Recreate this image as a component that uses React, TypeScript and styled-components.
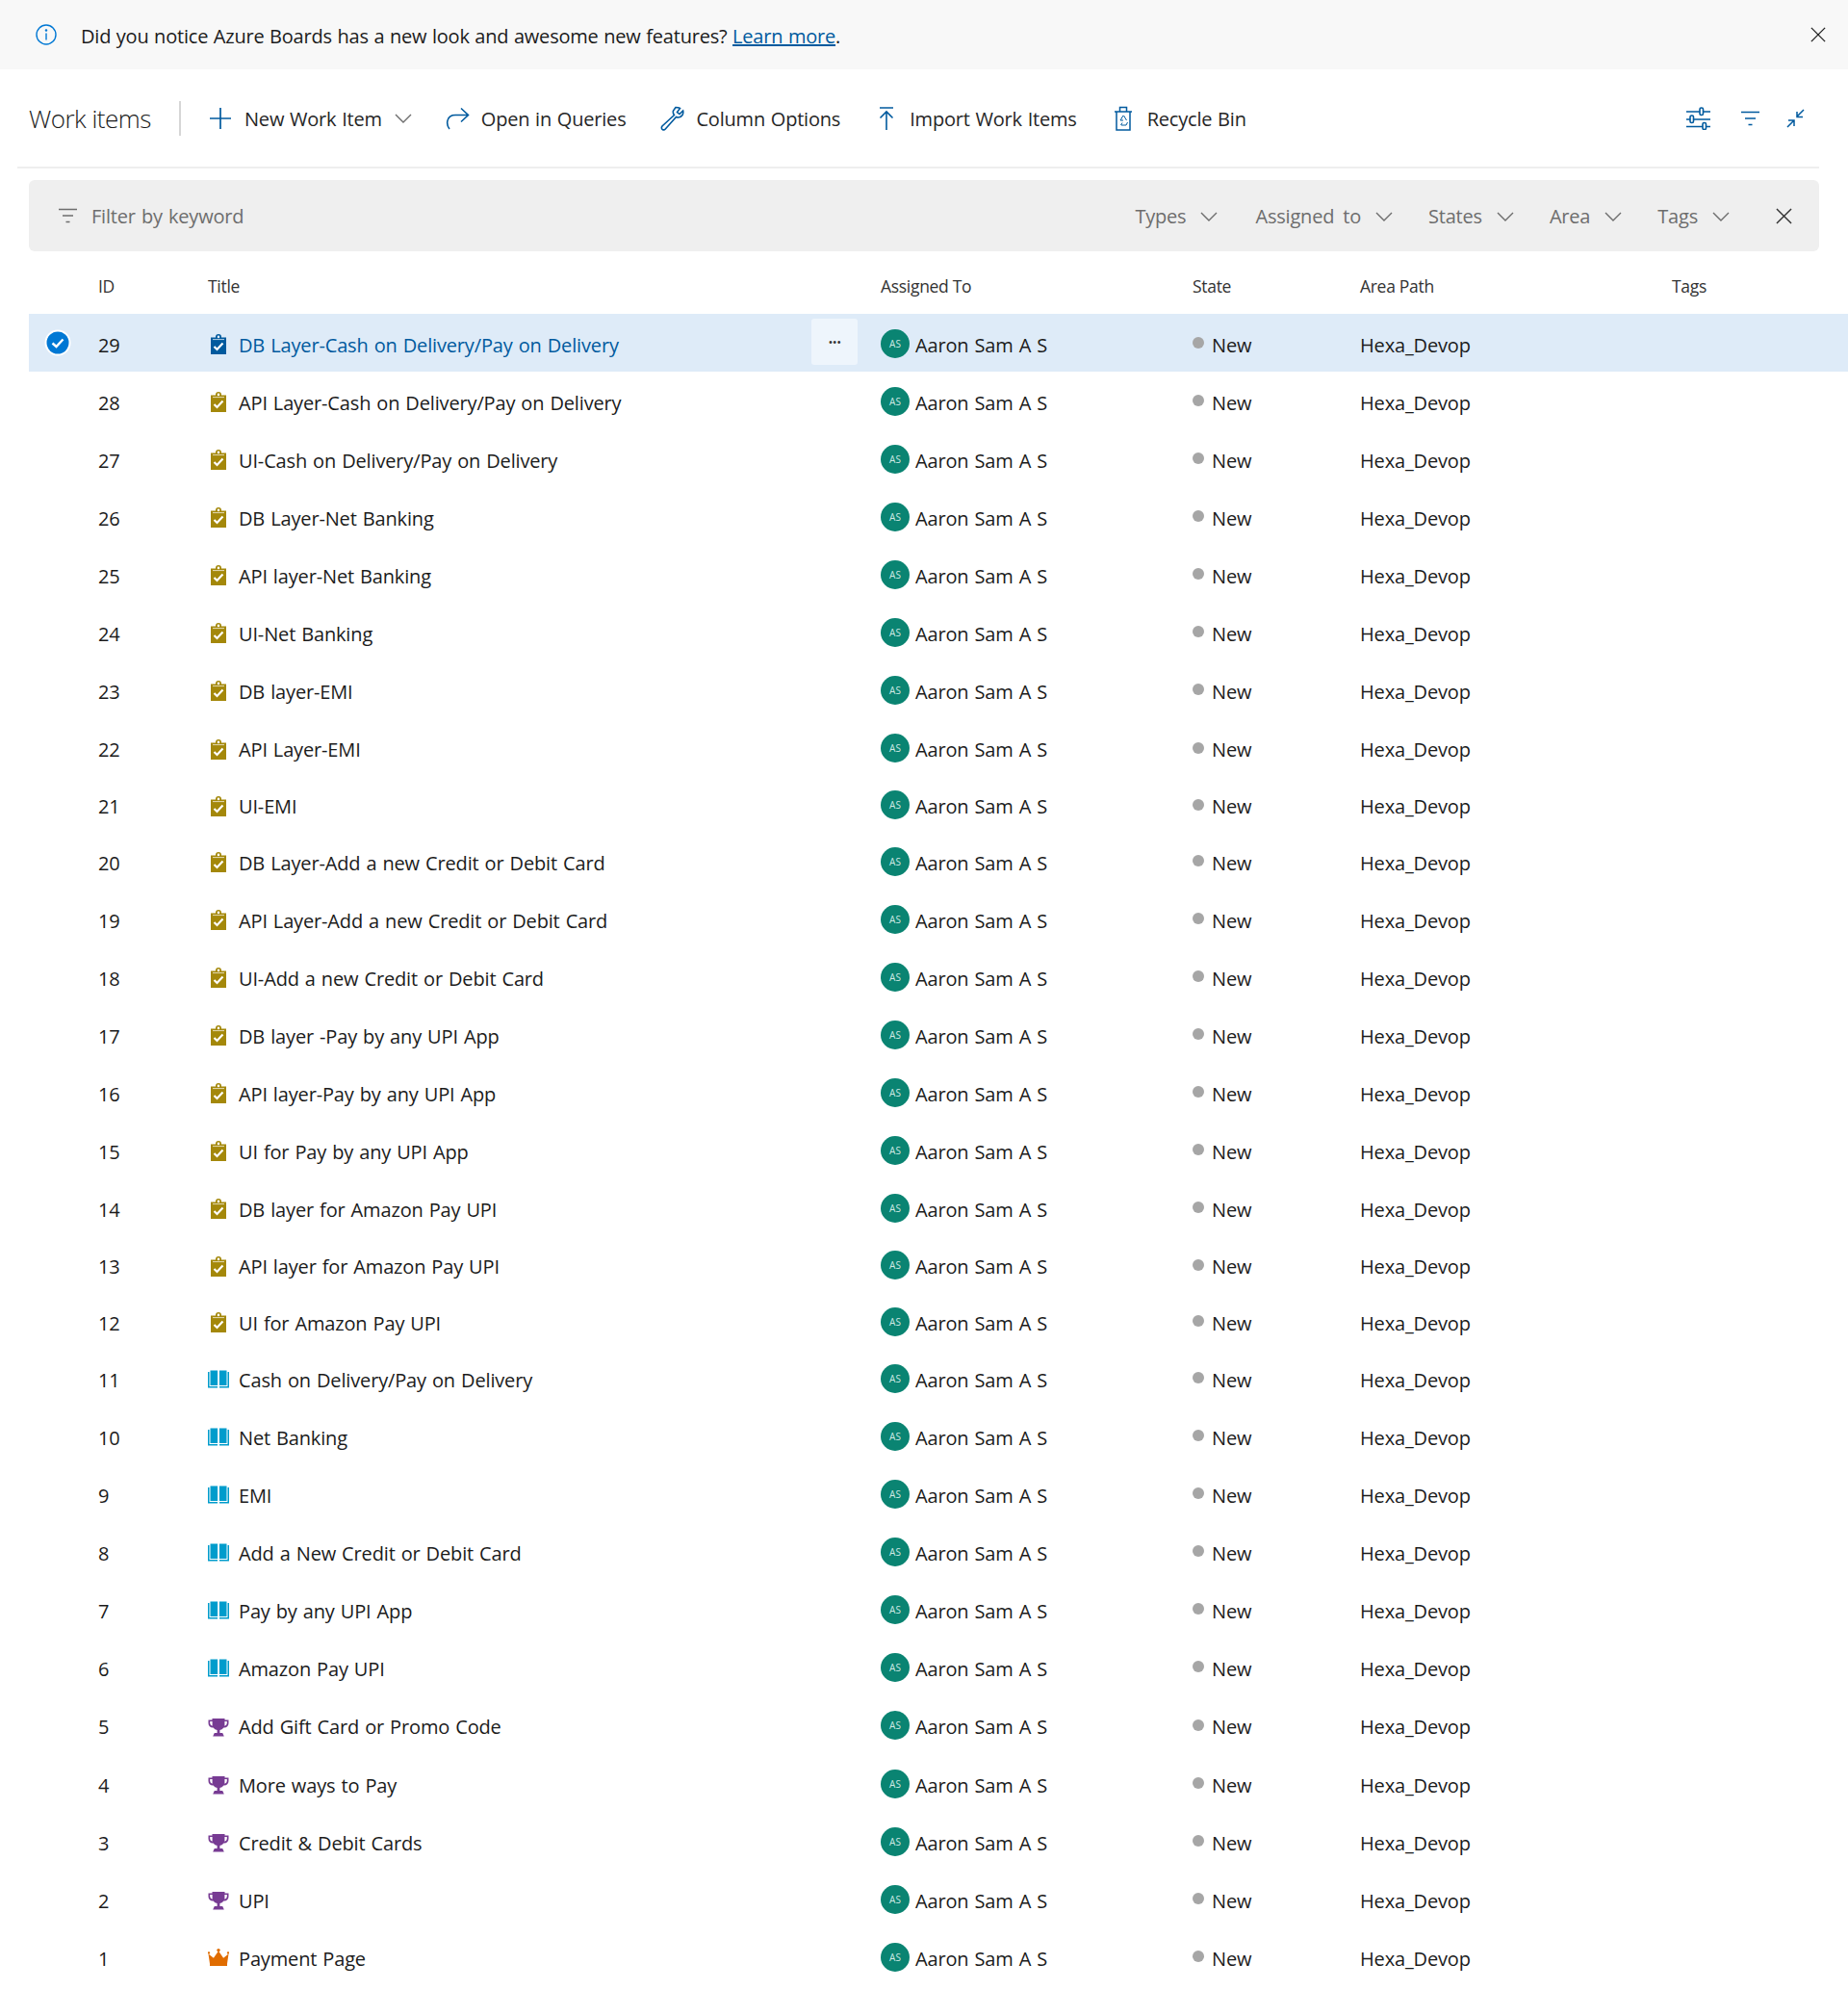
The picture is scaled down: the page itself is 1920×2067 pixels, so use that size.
import styled, { createGlobalStyle } from "styled-components"

const GlobalStyle = createGlobalStyle`
  html, body {
    margin: 0;
    padding: 0;
    background: #fff;
  }
  body {
    font-family: "Open Sans", "Noto Sans", "Liberation Sans", sans-serif;
    color: #1b1b1b;
  }
`

const Page = styled.div`
  width: 1920px;
  height: 2067px;
  overflow: hidden;
  background: #fff;
`

const Banner = styled.div`
  height: 72px;
  background: #f8f8f8;
  display: flex;
  align-items: center;
  padding: 0 23px 0 37px;
  font-size: 20px;
  letter-spacing: -0.2px;
  word-spacing: 0.6px;
`

const BannerText = styled.span`
  margin-left: 25px;
  padding-top: 2px;
  flex: 1;
`

const LearnMore = styled.a`
  color: #005a9e;
  text-decoration: underline;
`

const Toolbar = styled.div`
  height: 103px;
  margin: 0 30px 0 18px;
  padding: 0 0 0 12px;
  border-bottom: 2px solid #eeeeee;
  display: flex;
  align-items: center;
  box-sizing: border-box;
`

const PageTitle = styled.h1`
  margin: 0;
  width: 156px;
  height: 36px;
  line-height: 36px;
  font-size: 26px;
  font-weight: 300;
  letter-spacing: -0.5px;
  border-right: 2px solid #d6d6d6;
  box-sizing: content-box;
  flex: none;
`

const ToolButton = styled.div<{ $left: number; $gap: number }>`
  display: flex;
  align-items: center;
  gap: ${(p) => p.$gap}px;
  margin-left: ${(p) => p.$left}px;
  font-size: 20px;
  letter-spacing: -0.2px;
  word-spacing: 0.8px;
  color: #262626;
  white-space: nowrap;
  svg {
    flex: none;
  }
`

const ToolLabel = styled.span`
  padding-top: 2px;
`

const ToolIcons = styled.div`
  margin-left: auto;
  display: flex;
  align-items: center;
  gap: 28px;
  padding-right: 15px;
  svg:first-child {
    margin-right: 4px;
  }
`

const FilterBar = styled.div`
  height: 74px;
  margin: 12px 30px 0;
  padding: 0 28px 0 31px;
  background: #efefef;
  border-radius: 6px;
  display: flex;
  align-items: center;
  color: #6d6d6d;
  font-size: 20px;
  letter-spacing: -0.2px;
  word-spacing: 1.2px;
`

const Keyword = styled.span`
  margin-left: 15px;
  padding-top: 1px;
  flex: 1;
`

const FilterPick = styled.div<{ $gap: number; $left: number }>`
  display: flex;
  align-items: center;
  gap: ${(p) => p.$gap}px;
  margin-left: ${(p) => p.$left}px;
  padding-top: 1px;
  word-spacing: 4px;
`

const COLUMNS = "72px 114px 699px 324px 174px 324px 1fr"

const HeaderRow = styled.div`
  display: grid;
  grid-template-columns: ${COLUMNS};
  height: 65px;
  padding-top: 6px;
  box-sizing: border-box;
  margin-left: 30px;
  align-items: center;
  font-size: 17.5px;
  letter-spacing: -0.3px;
  color: #333;
`

const Row = styled.div<{ $selected?: boolean; $height: number }>`
  display: grid;
  grid-template-columns: ${COLUMNS};
  height: ${(p) => p.$height}px;
  padding-top: 4px;
  box-sizing: border-box;
  margin-left: 30px;
  align-items: center;
  font-size: 20px;
  letter-spacing: -0.15px;
  word-spacing: 1px;
  background: ${(p) => (p.$selected ? "#deebf8" : "transparent")};
`

const CheckCell = styled.div`
  display: flex;
  padding-left: 16px;
  margin-top: -4px;
`

const TitleCell = styled.div<{ $selected?: boolean }>`
  display: flex;
  align-items: center;
  height: 100%;
  gap: 10px;
  padding-right: 24px;
  color: ${(p) => (p.$selected ? "#005a9e" : "inherit")};
`

const MoreButton = styled.div`
  margin-left: auto;
  width: 48px;
  height: 48px;
  margin-top: -6px;
  border-radius: 3px;
  background: #eef5fc;
  display: flex;
  align-items: center;
  justify-content: center;
  box-sizing: border-box;
  color: #333;
  font-size: 13px;
  letter-spacing: -0.5px;
`

const AssignedCell = styled.div`
  display: flex;
  align-items: center;
  gap: 6px;
`

const Avatar = styled.span`
  width: 30px;
  height: 30px;
  margin-top: -3px;
  border-radius: 50%;
  background: #0a8472;
  color: #cfe8e3;
  font-size: 10px;
  letter-spacing: 0;
  display: flex;
  align-items: center;
  justify-content: center;
`

const StateCell = styled.div`
  display: flex;
  align-items: center;
  gap: 8px;
`

const StateDot = styled.span`
  width: 12px;
  height: 12px;
  margin-top: -4px;
  border-radius: 50%;
  background: #a6a6a6;
`

type Kind = "task" | "story" | "feature" | "epic"

const TaskIcon = ({ color }: { color: string }) => (
  <svg width="22" height="22" viewBox="0 0 22 22">
    <path
      fill={color}
      d="M3 3.500h5V3a3 3 0 0 1 6 0v.5h5V21H3z M11 1.600a1.300 1.300 0 1 0 0 2.600a1.300 1.300 0 0 0 0-2.600z"
      fillRule="evenodd"
    />
    <path d="M6.500 13l3 3 6-6.500" fill="none" stroke="#fff" strokeWidth="2.200" />
    <path d="M5 5.600h12" stroke="#fff" strokeWidth="1" opacity="0.7" />
  </svg>
)

const BookIcon = () => (
  <svg width="22" height="22" viewBox="0 0 22 22">
    <path fill="#009ccc" d="M0 3h1.500v15H10v1.500H0zM22 3h-1.500v15H12v1.500h10z" />
    <path fill="#009ccc" d="M2.500 1.500h7.600v15.500H2.500zM11.900 1.500h7.600v15.500h-7.600z" />
  </svg>
)

const TrophyIcon = () => (
  <svg width="22" height="22" viewBox="0 0 22 22">
    <path
      fill="#773b93"
      d="M4.500 2h13v1.500H21.500V7a4.500 4.500 0 0 1-4.500 4.500h-.6A5.800 5.800 0 0 1 12.400 14v3h2.800l1.600 3.400H5.200L6.800 17h2.800v-3a5.800 5.800 0 0 1-4-2.500H5A4.500 4.500 0 0 1 .5 7V3.500h4z M2.200 5v2A3 3 0 0 0 4.600 9.700V5z M19.800 5h-2.400v4.700A3 3 0 0 0 19.800 7z"
      fillRule="evenodd"
    />
  </svg>
)

const CrownIcon = () => (
  <svg width="22" height="22" viewBox="0 0 22 22">
    <path fill="#e06c00" d="M2 19V16.800L.5 6.500l5.400 4.200L11 3.500l5.100 7.200 5.400-4.200L20 16.800V19z" />
    <circle cx="11" cy="2.600" r="1.700" fill="#e06c00" />
    <circle cx="1" cy="5.400" r="1.200" fill="#e06c00" />
    <circle cx="21" cy="5.400" r="1.200" fill="#e06c00" />
  </svg>
)

const KindIcon = ({ kind, selected }: { kind: Kind; selected?: boolean }) => {
  if (kind === "task") return <TaskIcon color={selected ? "#005a9e" : "#a4880a"} />
  if (kind === "story") return <BookIcon />
  if (kind === "feature") return <TrophyIcon />
  return <CrownIcon />
}

const Chevron = ({ color = "#6d6d6d" }: { color?: string }) => (
  <svg width="18" height="10" viewBox="0 0 18 10" fill="none" stroke={color} strokeWidth="1.400">
    <path d="M1 1l8 8 8-8" />
  </svg>
)

const Cross = ({ size, color }: { size: number; color: string }) => (
  <svg width={size} height={size} viewBox="0 0 18 18" fill="none" stroke={color} strokeWidth="1.500">
    <path d="M1 1l16 16M17 1L1 17" />
  </svg>
)

const FilterIcon = ({ color, width }: { color: string; width: number }) => (
  <svg width={width} height="16" viewBox="0 0 19 16" fill="none" stroke={color} strokeWidth="1.400">
    <path d="M0 1.500h19M4 8h11M7.500 14.500h4" />
  </svg>
)

const BLUE = "#005a9e"

const InfoIcon = () => (
  <svg width="22" height="22" viewBox="0 0 22 22" fill="none" stroke="#0078d4" strokeWidth="1.400">
    <circle cx="11" cy="11" r="10" />
    <path d="M11 9.500v7" />
    <circle cx="11" cy="6.500" r="0.600" fill="#0078d4" />
  </svg>
)

const PlusIcon = () => (
  <svg width="24" height="24" viewBox="0 0 24 24" fill="none" stroke={BLUE} strokeWidth="1.700">
    <path d="M12 1v22M1 12h22" />
  </svg>
)

const ShareIcon = () => (
  <svg width="25" height="24" viewBox="0 0 25 24" fill="none" stroke={BLUE} strokeWidth="1.600">
    <path d="M4 23C0 18 1 8.500 10 8.500h13M16 1.500l7.500 7-7.500 7" />
  </svg>
)

const WrenchIcon = () => (
  <svg width="25" height="26" viewBox="0 0 25 26" fill="none" stroke={BLUE} strokeWidth="1.600">
    <path d="M16 1.500l-2.500 3.500c-.5 2 .1 3.500 1 4.500L2 21c-1 1.300-.8 2.800.3 3.500 1 .6 2.200.4 3-.5L16.500 11.500c2.500 1 5 .3 6.500-2 .8-1.500 1-3 .6-4.500L20 8.500l-2.500-2 3-4c-1.400-.9-3-1-4.500-1z" />
  </svg>
)

const ImportIcon = () => (
  <svg width="20" height="24" viewBox="0 0 20 24" fill="none" stroke={BLUE} strokeWidth="1.600">
    <path d="M3 1h14M10 24V5M3.500 11.500L10 5l6.500 6.500" />
  </svg>
)

const RecycleIcon = () => (
  <svg width="20" height="26" viewBox="0 0 20 26" fill="none" stroke={BLUE} strokeWidth="1.500">
    <path d="M1 6h18M3 6v19h14V6M6.500 6V1.500h7V6" />
    <path d="M10 10l-3 5h3M10.500 10l3 5M8 20h5l1.500-3M9 17.500l-1.500 2.500" strokeWidth="1" />
  </svg>
)

const SlidersIcon = () => (
  <svg width="26" height="24" viewBox="0 0 26 24" fill="none" stroke={BLUE} strokeWidth="1.600">
    <path d="M1 5h25M1 13h25M1 20.500h25" />
    <rect x="15" y="1" width="3.500" height="7.500" rx="1.500" fill="#fff" />
    <rect x="5" y="9" width="3.500" height="7.500" rx="1.500" fill="#fff" />
    <rect x="18" y="16.500" width="3.500" height="7" rx="1.500" fill="#fff" />
  </svg>
)

const CollapseIcon = () => (
  <svg width="19" height="20" viewBox="0 0 19 20" fill="none" stroke={BLUE} strokeWidth="1.500">
    <path d="M18 1l-7 7M11 3v5.500h6M1 19l7-7M2 12h6v6" />
  </svg>
)

const CheckBadge = () => (
  <svg width="28" height="28" viewBox="0 0 28 28">
    <circle cx="14" cy="14" r="13.500" fill="#fff" />
    <circle cx="14" cy="14" r="11.500" fill="#0078d4" />
    <path d="M8.500 14.500l4 3.500 7-7.500" fill="none" stroke="#fff" strokeWidth="2.400" />
  </svg>
)

type Item = { id: number; title: string; kind: Kind; height?: number }

const items: Item[] = [
  { id: 29, title: "DB Layer-Cash on Delivery/Pay on Delivery", kind: "task" },
  { id: 28, title: "API Layer-Cash on Delivery/Pay on Delivery", kind: "task" },
  { id: 27, title: "UI-Cash on Delivery/Pay on Delivery", kind: "task" },
  { id: 26, title: "DB Layer-Net Banking", kind: "task" },
  { id: 25, title: "API layer-Net Banking", kind: "task" },
  { id: 24, title: "UI-Net Banking", kind: "task" },
  { id: 23, title: "DB layer-EMI", kind: "task" },
  { id: 22, title: "API Layer-EMI", kind: "task", height: 61 },
  { id: 21, title: "UI-EMI", kind: "task", height: 57 },
  { id: 20, title: "DB Layer-Add a new Credit or Debit Card", kind: "task" },
  { id: 19, title: "API Layer-Add a new Credit or Debit Card", kind: "task" },
  { id: 18, title: "UI-Add a new Credit or Debit Card", kind: "task" },
  { id: 17, title: "DB layer -Pay by any UPI App", kind: "task" },
  { id: 16, title: "API layer-Pay by any UPI App", kind: "task" },
  { id: 15, title: "UI for Pay by any UPI App", kind: "task" },
  { id: 14, title: "DB layer for Amazon Pay UPI", kind: "task" },
  { id: 13, title: "API layer for Amazon Pay UPI", kind: "task", height: 59 },
  { id: 12, title: "UI for Amazon Pay UPI", kind: "task", height: 58 },
  { id: 11, title: "Cash on Delivery/Pay on Delivery", kind: "story" },
  { id: 10, title: "Net Banking", kind: "story" },
  { id: 9, title: "EMI", kind: "story" },
  { id: 8, title: "Add a New Credit or Debit Card", kind: "story" },
  { id: 7, title: "Pay by any UPI App", kind: "story" },
  { id: 6, title: "Amazon Pay UPI", kind: "story" },
  { id: 5, title: "Add Gift Card or Promo Code", kind: "feature", height: 61 },
  { id: 4, title: "More ways to Pay", kind: "feature" },
  { id: 3, title: "Credit & Debit Cards", kind: "feature" },
  { id: 2, title: "UPI", kind: "feature" },
  { id: 1, title: "Payment Page", kind: "epic" },
]

const pickers = [
  { label: "Types", gap: 15, left: 0 },
  { label: "Assigned to", gap: 15, left: 39 },
  { label: "States", gap: 15, left: 37 },
  { label: "Area", gap: 15, left: 37 },
  { label: "Tags", gap: 15, left: 37 },
]

export default function App() {
  return (
    <Page>
      <GlobalStyle />
      <Banner>
        <InfoIcon />
        <BannerText>
          Did you notice Azure Boards has a new look and awesome new features? <LearnMore>Learn more</LearnMore>.
        </BannerText>
        <Cross size={16} color="#222" />
      </Banner>
      <Toolbar>
        <PageTitle>Work items</PageTitle>
        <ToolButton $left={29} $gap={13}>
          <PlusIcon />
          <ToolLabel>New Work Item</ToolLabel>
          <Chevron />
        </ToolButton>
        <ToolButton $left={35} $gap={12}>
          <ShareIcon />
          <ToolLabel>Open in Queries</ToolLabel>
        </ToolButton>
        <ToolButton $left={36} $gap={12}>
          <WrenchIcon />
          <ToolLabel>Column Options</ToolLabel>
        </ToolButton>
        <ToolButton $left={38} $gap={14}>
          <ImportIcon />
          <ToolLabel>Import Work Items</ToolLabel>
        </ToolButton>
        <ToolButton $left={38} $gap={15}>
          <RecycleIcon />
          <ToolLabel>Recycle Bin</ToolLabel>
        </ToolButton>
        <ToolIcons>
          <SlidersIcon />
          <FilterIcon color={BLUE} width={19} />
          <CollapseIcon />
        </ToolIcons>
      </Toolbar>
      <FilterBar>
        <FilterIcon color="#6d6d6d" width={19} />
        <Keyword>Filter by keyword</Keyword>
        {pickers.map((p) => (
          <FilterPick key={p.label} $gap={p.gap} $left={p.left}>
            {p.label}
            <Chevron />
          </FilterPick>
        ))}
        <FilterPick $gap={0} $left={48}>
          <Cross size={17} color="#333" />
        </FilterPick>
      </FilterBar>
      <HeaderRow>
        <span />
        <span>ID</span>
        <span>Title</span>
        <span>Assigned To</span>
        <span>State</span>
        <span>Area Path</span>
        <span>Tags</span>
      </HeaderRow>
      {items.map((item, i) => {
        const selected = i === 0
        return (
          <Row key={item.id} $selected={selected} $height={item.height ?? 60}>
            <CheckCell>{selected && <CheckBadge />}</CheckCell>
            <span>{item.id}</span>
            <TitleCell $selected={selected}>
              <KindIcon kind={item.kind} selected={selected} />
              {item.title}
              {selected && <MoreButton>•••</MoreButton>}
            </TitleCell>
            <AssignedCell>
              <Avatar>AS</Avatar>
              Aaron Sam A S
            </AssignedCell>
            <StateCell>
              <StateDot />
              New
            </StateCell>
            <span>Hexa_Devop</span>
            <span />
          </Row>
        )
      })}
    </Page>
  )
}
